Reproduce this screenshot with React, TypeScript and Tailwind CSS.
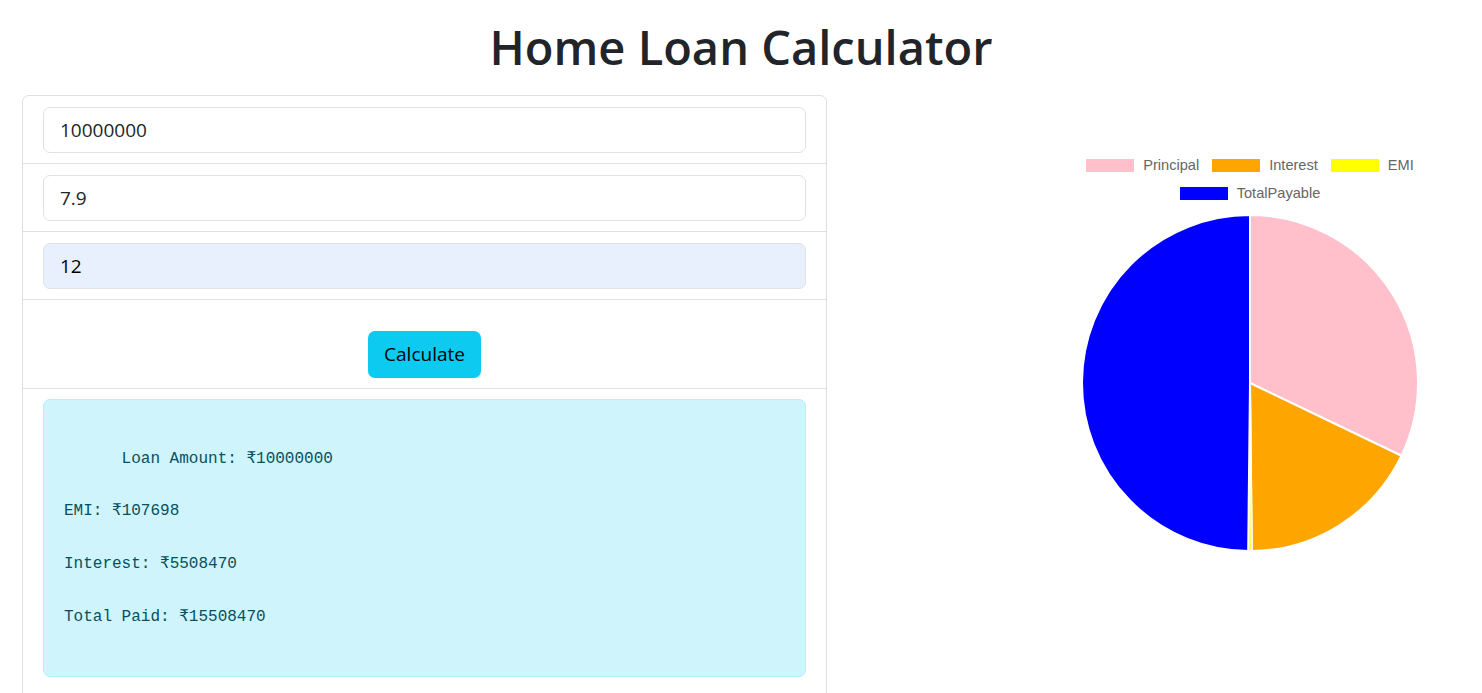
import React from "react";

const data = [
  { label: "Principal", value: 10000000, color: "#ffc0cb" },
  { label: "Interest", value: 5508470, color: "#ffa500" },
  { label: "EMI", value: 107698, color: "#ffff00" },
  { label: "TotalPayable", value: 15508470, color: "#0000ff" },
];

function arcPath(cx: number, cy: number, r: number, a0: number, a1: number) {
  const p = (a: number) => {
    const rad = ((a - 90) * Math.PI) / 180;
    return [cx + r * Math.cos(rad), cy + r * Math.sin(rad)];
  };
  const [x0, y0] = p(a0);
  const [x1, y1] = p(a1);
  const large = a1 - a0 > 180 ? 1 : 0;
  return `M ${cx} ${cy} L ${x0} ${y0} A ${r} ${r} 0 ${large} 1 ${x1} ${y1} Z`;
}

function Pie() {
  const total = data.reduce((s, d) => s + d.value, 0);
  let acc = 0;
  const cx = 170;
  const cy = 169;
  const r = 168;
  return (
    <svg width="340" height="338" viewBox="0 0 340 338">
      {data.map((d) => {
        const a0 = (acc / total) * 360;
        acc += d.value;
        const a1 = (acc / total) * 360;
        return (
          <path
            key={d.label}
            d={arcPath(cx, cy, r, a0, a1)}
            fill={d.color}
            stroke="#ffffff"
            strokeWidth={2}
            strokeLinejoin="bevel"
          />
        );
      })}
    </svg>
  );
}

function LegendItem({ label, color }: { label: string; color: string }) {
  return (
    <div className="flex items-center gap-[9px]">
      <span className="block w-[48px] h-[13px]" style={{ backgroundColor: color }} />
      <span className="text-[14.6px] text-[#666666] font-['Liberation_Sans',Arial,sans-serif]">{label}</span>
    </div>
  );
}

export default function App() {
  const result =
    "\n      Loan Amount: ₹10000000\n\nEMI: ₹107698\n\nInterest: ₹5508470\n\nTotal Paid: ₹15508470\n\n";
  return (
    <div className="min-h-screen bg-white text-[#212529] font-['Open_Sans','Noto_Sans',sans-serif]">
      <h1 className="text-center text-[47px] font-semibold leading-[56px] pt-[19px] mb-[20px]">
        Home Loan Calculator
      </h1>
      <div className="flex pl-[22px]">
        <div className="w-[805px] border border-[#dfdfdf] rounded-t-[7px]">
          <div className="px-[20px] py-[10.5px] border-b border-[#dfdfdf]">
            <input
              readOnly
              value="10000000"
              className="w-full h-[46px] rounded-[7px] border border-[#dee2e6] px-[16px] text-[19px] bg-white outline-none"
            />
          </div>
          <div className="px-[20px] py-[10.5px] border-b border-[#dfdfdf]">
            <input
              readOnly
              value="7.9"
              className="w-full h-[46px] rounded-[7px] border border-[#dee2e6] px-[16px] text-[19px] bg-white outline-none"
            />
          </div>
          <div className="px-[20px] py-[10.5px] border-b border-[#dfdfdf]">
            <input
              readOnly
              value="12"
              className="w-full h-[46px] rounded-[7px] border border-[#dee2e6] px-[16px] text-[19px] bg-[#e8f0fe] text-black outline-none"
            />
          </div>
          <div className="px-[20px] py-[10.5px] border-b border-[#dfdfdf] flex justify-center">
            <button className="mt-[20px] h-[47px] px-[16px] rounded-[7px] bg-[#0dcaf0] text-[19px] text-[#000000]">
              Calculate
            </button>
          </div>
          <div className="px-[20px] pt-[10px] pb-[60px]">
            <div className="rounded-[7px] border border-[#b6effb] bg-[#cff4fc] text-[#055160] px-[20px] py-[19.5px]">
              <pre className="m-0 whitespace-pre font-['Liberation_Mono','DejaVu_Sans_Mono',monospace] text-[16px] leading-[26.3px]">
                {result}
              </pre>
            </div>
          </div>
        </div>
        <div className="flex-1 flex justify-end pr-[62px]">
          <div className="w-[340px] pt-[57px] flex flex-col items-center">
            <div className="h-[28px] flex items-center gap-[13px]">
              <LegendItem label="Principal" color="#ffc0cb" />
              <LegendItem label="Interest" color="#ffa500" />
              <LegendItem label="EMI" color="#ffff00" />
            </div>
            <div className="h-[28px] flex items-center gap-[13px]">
              <LegendItem label="TotalPayable" color="#0000ff" />
            </div>
            <div className="mt-[6px]">
              <Pie />
            </div>
          </div>
        </div>
      </div>
    </div>
  );
}
